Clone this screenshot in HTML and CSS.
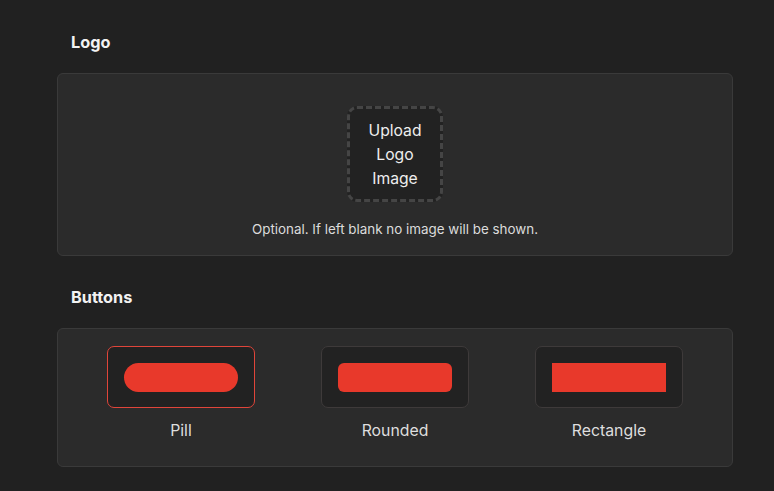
FILE: index.html
```html
<!DOCTYPE html>
<html lang="en">
<head>
<meta charset="utf-8">
<title>Branding settings</title>
<link rel="stylesheet" href="styles.css">
</head>
<body>
<main class="settings">
  <section class="group">
    <h2 class="group-title">Logo</h2>
    <div class="panel panel-logo">
      <button class="upload" type="button">Upload<br>Logo<br>Image</button>
      <p class="hint">Optional. If left blank no image will be shown.</p>
    </div>
  </section>

  <section class="group">
    <h2 class="group-title">Buttons</h2>
    <div class="panel panel-buttons">
      <div class="style-option">
        <div class="style-card is-selected"><span class="swatch swatch-pill"></span></div>
        <span class="style-label">Pill</span>
      </div>
      <div class="style-option">
        <div class="style-card"><span class="swatch swatch-rounded"></span></div>
        <span class="style-label">Rounded</span>
      </div>
      <div class="style-option">
        <div class="style-card"><span class="swatch swatch-rect"></span></div>
        <span class="style-label">Rectangle</span>
      </div>
    </div>
  </section>
</main>
</body>
</html>
```

FILE: styles.css
```css
* { box-sizing: border-box; }

html, body {
  margin: 0;
  background: #212121;
  color: #e6e6e6;
  font-family: Inter, "Noto Sans", sans-serif;
}

.settings {
  width: 676px;
  margin-left: 57px;
  padding-top: 31px;
}

.group-title {
  margin: 0;
  padding-left: 14px;
  font-size: 16.3px;
  line-height: 22px;
  font-weight: 700;
  color: #f2f2f2;
}

.panel {
  background: #2b2b2b;
  border: 1px solid #3a3a3a;
  border-radius: 6px;
  margin-top: 20px;
}

.group + .group { margin-top: 30px; }

.panel-logo {
  height: 183px;
  padding-top: 32px;
  display: flex;
  flex-direction: column;
  align-items: center;
}

.upload {
  width: 96px;
  height: 96px;
  background: #222222;
  border: 3px dashed #454545;
  border-radius: 10px;
  color: #eeeeee;
  font-family: inherit;
  font-size: 15.7px;
  line-height: 24px;
  padding: 2px 0 0;
  cursor: pointer;
}

.hint {
  margin: 17px 0 0;
  font-size: 13.4px;
  line-height: 20px;
  color: #dcdcdc;
}

.panel-buttons {
  height: 139px;
  padding: 17px 16px 0;
  display: grid;
  grid-template-columns: repeat(3, 1fr);
  align-content: start;
}

.style-option {
  display: flex;
  flex-direction: column;
  align-items: center;
}

.style-card {
  width: 148px;
  height: 62px;
  padding: 16px;
  background: #222222;
  border: 1px solid #3e3a3a;
  border-radius: 7px;
  display: flex;
  align-items: center;
}

.style-card.is-selected { border-color: #e0453a; }

.swatch {
  display: block;
  width: 100%;
  height: 29px;
  background: #e8392b;
}

.swatch-pill { border-radius: 15px; }
.swatch-rounded { border-radius: 6px; }
.swatch-rect { border-radius: 0; }

.style-label {
  margin-top: 12px;
  font-size: 15.8px;
  line-height: 22px;
  color: #dedede;
}
```
